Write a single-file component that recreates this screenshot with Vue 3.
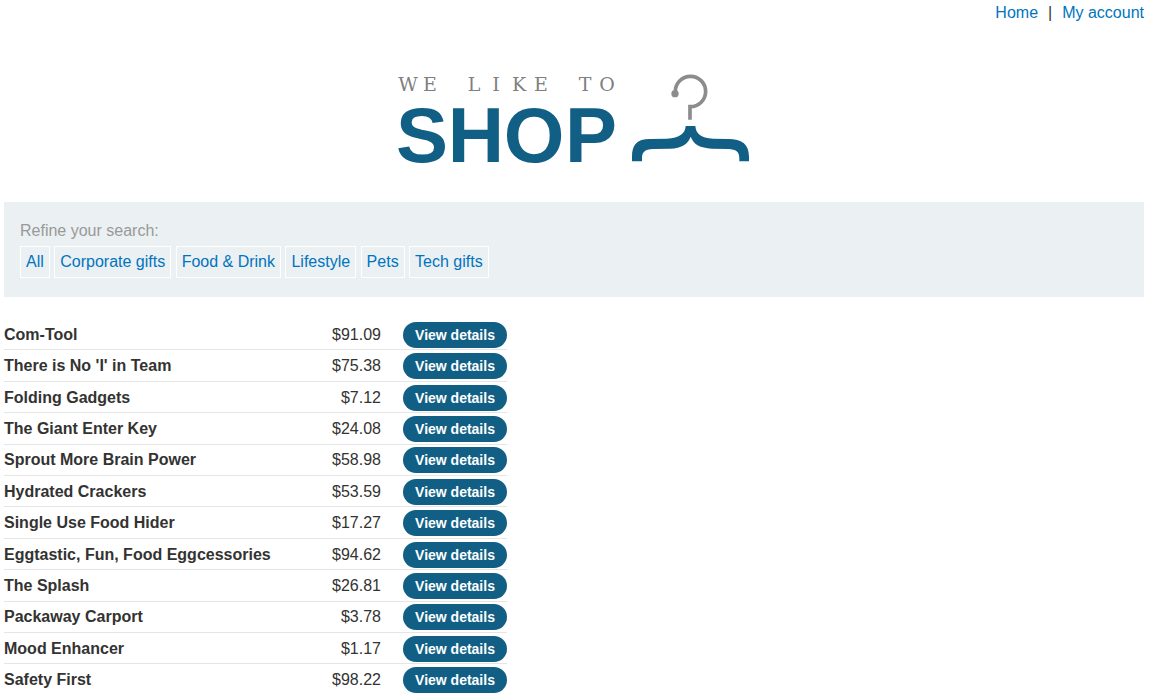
<script setup>
const filters = ['All', 'Corporate gifts', 'Food & Drink', 'Lifestyle', 'Pets', 'Tech gifts']

const products = [
  { name: 'Com-Tool', price: '$91.09' },
  { name: "There is No 'I' in Team", price: '$75.38' },
  { name: 'Folding Gadgets', price: '$7.12' },
  { name: 'The Giant Enter Key', price: '$24.08' },
  { name: 'Sprout More Brain Power', price: '$58.98' },
  { name: 'Hydrated Crackers', price: '$53.59' },
  { name: 'Single Use Food Hider', price: '$17.27' },
  { name: 'Eggtastic, Fun, Food Eggcessories', price: '$94.62' },
  { name: 'The Splash', price: '$26.81' },
  { name: 'Packaway Carport', price: '$3.78' },
  { name: 'Mood Enhancer', price: '$1.17' },
  { name: 'Safety First', price: '$98.22' }
]
</script>

<template>
  <div class="page">
    <header>
      <nav class="top-links" aria-label="Account">
        <a href="#">Home</a>
        <span>|</span>
        <a href="#">My account</a>
      </nav>
      <svg class="logo" width="358" height="120" viewBox="-4 -8 358 120" role="img" aria-label="We like to shop">
        <text class="tagline" x="9 31 53 75 97 120 142 164 186 208" y="17">WE LIKE TO</text>
        <text class="brand" x="23 77 135 192" y="88">SHOP</text>
        <g transform="translate(221 -14) scale(0.3333)">
          <path class="hook" d="M166 101V95A45.500 45.500 0 1 1 210 140V179" />
          <circle class="tip" cx="165" cy="101" r="11" />
          <path
            class="hanger"
            d="M36 304V290C36 255 50 237 90 237L140 236C180 234 196 220 197 198H226C228 220 240 234 280 236L325 237C365 237 387 252 387 290V304H358V295C358 275 348 268 325 267L275 266C240 263 222 255 212 230C202 255 185 264 150 266L100 267C72 268 66 278 66 295V304Z"
          />
        </g>
      </svg>
    </header>

    <main>
      <section class="search" aria-labelledby="refine">
        <p id="refine">Refine your search:</p>
        <div class="filters">
          <template v-for="filter in filters" :key="filter"><a href="#">{{ filter }}</a>{{ ' ' }}</template>
        </div>
      </section>

      <table class="products" aria-label="Products">
        <tbody>
          <tr v-for="product in products" :key="product.name">
            <th scope="row">{{ product.name }}</th>
            <td class="price">{{ product.price }}</td>
            <td class="action"><a class="details" href="#">View details</a></td>
          </tr>
        </tbody>
      </table>
    </main>
  </div>
</template>

<style>
body {
  margin: 0;
  background: #fff;
}
</style>

<style scoped>
.page {
  padding: 0 7px 0 4px;
  color: #333332;
  font-family: "Liberation Sans", Arial, sans-serif;
  font-size: 16px;
  line-height: 20px;
}
a {
  color: #0074bf;
  text-decoration: none;
}
.top-links {
  display: flex;
  justify-content: flex-end;
  gap: 10px;
  padding-top: 3px;
}
.logo {
  display: block;
  margin: 43px auto 0;
}
.tagline {
  fill: #808080;
  font-family: "DejaVu Serif", serif;
  font-size: 19px;
  text-anchor: middle;
}
.brand {
  fill: #115f84;
  font-size: 78px;
  font-weight: bold;
  text-anchor: middle;
}
.hook {
  fill: none;
  stroke: #8c8c8c;
  stroke-width: 11;
}
.tip {
  fill: #8c8c8c;
}
.hanger {
  fill: #115f84;
}
.search {
  margin-top: 16px;
  padding: 19px 16px;
  background: #ebf0f2;
}
.search p {
  margin: 0 0 5px;
  color: #999;
}
.filters a {
  display: inline-block;
  padding: 5px;
  border: 1px solid #fff;
}
.products {
  width: 503px;
  max-width: 100%;
  height: 377px;
  margin-top: 22px;
  border-spacing: 0;
}
.products th,
.products td {
  padding: 1px 0 0;
  border-bottom: 1px solid #e5e5e5;
}
.products th {
  text-align: left;
}
.products .price {
  text-align: right;
}
.products .action {
  width: 126px;
  padding-top: 2px;
  padding-bottom: 1px;
}
.details {
  display: block;
  margin-left: 22px;
  border-radius: 13px;
  background: #115f84;
  color: #fff;
  font-size: 14px;
  font-weight: bold;
  line-height: 26px;
  text-align: center;
}
</style>
